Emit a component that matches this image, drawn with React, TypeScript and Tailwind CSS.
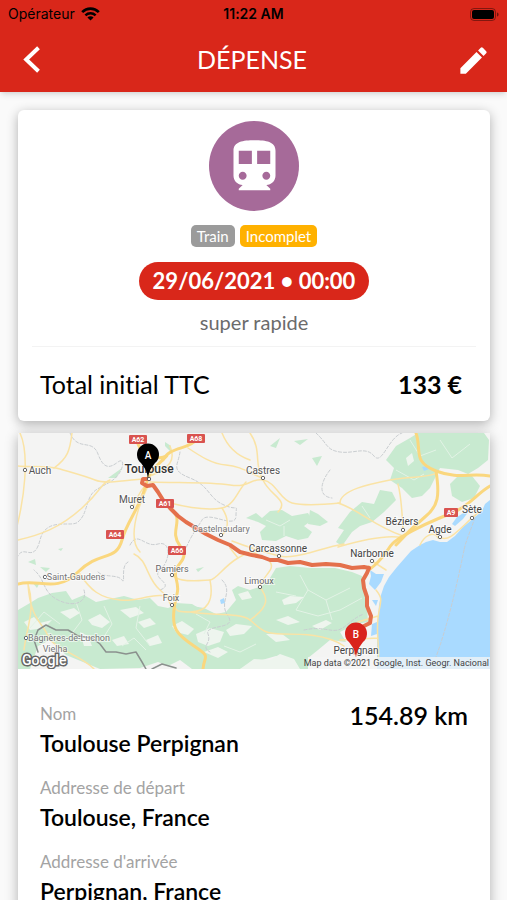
import { MdDirectionsSubway, MdEdit } from 'react-icons/md';

interface Expense {
  type: string;
  status: string;
  date: string;
  time: string;
  comment: string;
  total: string;
  distance: string;
}

interface Detail {
  label: string;
  value: string;
}

interface Place {
  name: string;
  x: number;
  y: number;
  dotX: number;
  dotY: number;
  size: number;
  color: string;
}

const expense: Expense = {
  type: 'Train',
  status: 'Incomplet',
  date: '29/06/2021',
  time: '00:00',
  comment: 'super rapide',
  total: '133 €',
  distance: '154.89 km',
};

const details: Detail[] = [
  { label: 'Nom', value: 'Toulouse Perpignan' },
  { label: 'Addresse de départ', value: 'Toulouse, France' },
  { label: "Addresse d'arrivée", value: 'Perpignan, France' },
];

const places: Place[] = [
  { name: 'Toulouse', x: 149, y: 473, dotX: 149, dotY: 479, size: 12, color: '#333' },
  { name: 'Auch', x: 40, y: 474, dotX: 25, dotY: 470, size: 10, color: '#555' },
  { name: 'Muret', x: 132, y: 503, dotX: 132, dotY: 507, size: 10, color: '#555' },
  { name: 'Castres', x: 263, y: 474, dotX: 263, dotY: 478, size: 10, color: '#555' },
  { name: 'Castelnaudary', x: 221, y: 532, dotX: 221, dotY: 535, size: 9, color: '#777' },
  { name: 'Carcassonne', x: 278, y: 552, dotX: 279, dotY: 556, size: 10, color: '#444' },
  { name: 'Béziers', x: 402, y: 525, dotX: 403, dotY: 530, size: 10, color: '#444' },
  { name: 'Agde', x: 440, y: 533, dotX: 440, dotY: 537, size: 10, color: '#444' },
  { name: 'Sète', x: 472, y: 513, dotX: 472, dotY: 518, size: 10, color: '#444' },
  { name: 'Narbonne', x: 372, y: 557, dotX: 372, dotY: 561, size: 10, color: '#444' },
  { name: 'Saint-Gaudens', x: 76, y: 580, dotX: 45, dotY: 577, size: 9, color: '#777' },
  { name: 'Pamiers', x: 172, y: 572, dotX: 172, dotY: 575, size: 9, color: '#666' },
  { name: 'Foix', x: 171, y: 601, dotX: 172, dotY: 605, size: 9, color: '#666' },
  { name: 'Limoux', x: 259, y: 584, dotX: 260, dotY: 587, size: 9, color: '#666' },
  { name: 'Bagnères-de-Luchon', x: 69, y: 641, dotX: 26, dotY: 638, size: 9, color: '#777' },
  { name: 'Vielha', x: 55, y: 652, dotX: 0, dotY: 0, size: 9, color: '#777' },
  { name: 'Perpignan', x: 356, y: 654, dotX: 0, dotY: 0, size: 10, color: '#444' },
];

const shields = [
  { name: 'A62', x: 138, y: 440 },
  { name: 'A68', x: 196, y: 439 },
  { name: 'A61', x: 165, y: 504 },
  { name: 'A64', x: 115, y: 535 },
  { name: 'A66', x: 177, y: 551 },
  { name: 'A9', x: 451, y: 513 },
];

const forests = [
  'M18 610L30 603 38 598 52 593 66 591 72 600 84 595 96 602 110 599 124 596 138 600 150 598 158 606 168 608 178 604 192 606 204 608 216 614 226 612 236 600 232 590 238 586 250 590 262 586 270 578 276 568 290 566 310 568 335 568 352 572 362 576 364 590 367 606 368 622 356 624 340 632 346 642 330 640 318 650 308 658 308 669 280 669 290 660 276 656 262 660 248 666 240 669 192 669 180 660 168 666 158 662 140 668 100 669 66 655 50 640 38 646 30 669 18 669z',
  'M246 518L256 513 262 518 270 511 282 510 292 516 308 513 312 520 304 526 312 532 308 538 298 540 286 536 276 541 262 540 260 532 266 526 258 522z',
  'M396 446L410 438 418 433 484 433 489 440 488 460 478 468 468 474 458 470 440 468 430 488 422 496 412 498 402 488 390 480 394 468 386 460z',
  'M450 484L460 474 472 476 480 486 474 498 462 502 452 496z',
  'M350 512L362 502 374 504 380 490 392 492 396 500 384 512 372 522 360 526 352 532 342 546 336 542 344 530 338 528z',
  'M270 446L280 438 276 448zM294 441L308 439 300 445zM312 458L322 456 317 466zM310 510l8 4 10 8-8 4-12-2z',
  'M108 478L122 468 116 478zM165 442l6 4 0 6-6-6zM28 562l7-3 1 6zM40 567l10 1-4 4zM32 582l8 0-3 6zM58 549l5-1-2 3z',
  'M176 603l16 1 10 6-24-2zM196 569l8-2-6 5z',
];

const clearings = [
  'M24 622l10-5 6 6 12-3-8 8-14 2zM60 612l14-4 6 5-10 6zM88 620l12-6 10 8-8 6-10-3zM120 610l16-3 8 6-14 5zM138 622l12-4 6 6-12 4zM112 640l12-4 5 8-12 2zM146 640l12-5 4 8-12 3z',
  'M172 626l10-5 12 8-6 6-12-3zM196 634l14-6 14 4-4 10-12 4-10-4zM226 630l10-6 16 2-8 8-14 2zM204 652l14-5 10 5-10 6zM238 594l10-3 4 7-10 2zM282 600l8-4 14 1-8 6-12 2zM276 620l12-4 12 6-12 3zM312 626l14-6 6 3-12 7zM406 458l6-5 2 8-6 5z',
  'M240 669l14-10 16 1 10-6 14 5 6 10zM80 632l8 4 4 10-8 0zM266 634l16 0 8 6-14 2z',
];

const valleys = [
  'M300 575L308 590 326 600 350 588M308 590L296 610 318 616 340 610 362 598M326 600L332 620M276 592L296 596',
  'M30 628L44 612 60 624M76 602L82 620 70 636M104 606L112 624 102 640M140 606L136 628 150 646M196 614L210 622 204 634',
  'M410 440L420 456 436 450M440 440L452 458 470 444M396 470L414 480 424 474M362 506L370 518',
  'M266 520L280 526 290 520M284 526L284 536M122 646L134 638 146 650M224 646L240 652 256 644',
];

const minorRoads = [
  'M18 466C30 467 50 466 60 469S85 476 95 480 122 481 142 479',
  'M72 433C70 450 68 458 54 468',
  'M20 433C30 455 24 500 16 530',
  'M18 540C40 535 60 528 82 508S100 484 110 480',
  'M133 507C138 495 142 488 147 484M148 486C136 510 128 540 140 552',
  'M150 482C180 483 210 482 230 485S250 478 263 480 280 500 292 503 320 505 340 503',
  'M150 476C170 468 176 460 170 446M188 448C200 456 212 464 226 465S248 472 262 478',
  'M222 433C228 448 238 456 250 460M250 433C262 450 254 464 262 478',
  'M170 503C190 508 210 510 222 508S238 490 246 482',
  'M222 508C230 520 228 530 222 535M232 541C250 548 264 552 279 556S320 548 344 544',
  'M263 480C270 496 290 500 278 512M340 503C340 490 370 484 390 480S430 478 436 473',
  'M338 503C360 510 372 525 403 536M398 484C402 500 402 515 403 530',
  'M338 547C362 540 388 534 403 538',
  'M172 575C180 584 204 580 210 580S224 566 238 558 250 550 260 556M238 558L230 548',
  'M134 554C148 560 146 578 160 590S166 602 172 605M80 574C90 590 100 598 120 600S150 592 172 597',
  'M210 580C214 600 208 612 190 612S180 610 172 605M190 612C210 616 240 612 250 620S262 634 282 634 326 634 344 646',
  'M250 620C270 606 268 598 260 587M260 587C262 576 276 570 270 562',
  'M28 584C36 610 26 630 24 650M28 584C30 620 44 624 48 636S82 656 94 669',
  'M378 662C380 648 376 636 378 618S384 600 376 590M340 640L378 638M358 622L378 616',
  'M440 537C450 545 466 520 482 510M420 545C424 536 434 530 438 538M372 561L386 570',
];

const mainRoads = [
  'M148 478C140 510 128 518 122 540S100 550 78 572 38 578 18 584',
  'M163 460C170 446 188 450 196 440M138 444C142 456 160 460 166 456S150 470 148 478',
  'M170 508C186 520 168 530 180 546S172 562 176 578 176 592 174 610 176 634 194 646 204 655 203 669',
  'M416 433C422 450 412 462 436 471S470 472 490 476M436 471C440 496 438 506 426 516S404 536 396 545',
  'M490 486C476 494 470 506 452 513S420 526 403 536 392 548 378 562 369 566 369 567',
];

const borders = [
  'M70 433C78 452 92 438 98 454S110 468 118 462 124 474 110 482 92 490 88 502 84 516 78 522 46 516 40 540 24 544 18 556',
  'M180 452C178 466 170 470 190 478S208 498 224 505 236 502 236 516 208 510 202 520 192 534 186 548',
  'M316 433C328 444 326 450 340 452S366 446 374 456 388 438 402 433M330 470C322 480 316 496 332 498',
  'M130 545C138 530 144 548 158 544S170 562 160 570 176 584 160 590',
  'M84 590C88 602 74 608 58 600S46 580 34 570M98 572C104 578 118 574 122 580S120 566 128 562',
  'M222 580C234 592 218 602 228 616S204 624 208 634 200 646 210 652',
  'M304 630C322 626 330 632 338 630S352 618 364 614M464 550C456 590 446 630 436 657M478 508C472 528 466 540 464 550',
];

const ROUTE =
  'M149 479L143 479 142 483 147 486 153 485 158 492 163 500 170 508 178 516 186 522 196 528 206 534 218 540 230 545 240 552 252 555 262 557 270 560 278 560 288 563 300 562 312 565 326 564 340 565 352 568 364 567 369 568 367 573 363 580 364 588 367 597 367 606 371 616 370 623 362 627 357 633 355 653';

const StatusBar = () => (
  <div className="grid h-7 grid-cols-3 items-center px-2 font-[Inter,sans-serif] text-sm text-black">
    <div className="flex items-center gap-1.5">
      <span>Opérateur</span>
      <svg width="19" height="14" viewBox="0 0 19 14" aria-hidden="true">
        <g fill="none" stroke="black">
          <path d="M1.2 5.1a11.8 11.8 0 0 1 16.6 0" strokeWidth="2.7" />
          <path d="M4.4 8.4a7.3 7.3 0 0 1 10.2 0" strokeWidth="2.5" />
        </g>
        <path d="M9.5 13.6L6.4 10.5a4.4 4.4 0 0 1 6.2 0z" />
      </svg>
    </div>
    <span className="text-center font-semibold">11:22 AM</span>
    <svg className="justify-self-end" width="29" height="13" viewBox="0 0 29 13" aria-hidden="true">
      <rect x="0.5" y="0.5" width="25" height="12" rx="3.5" fill="none" stroke="black" strokeOpacity="0.4" />
      <rect x="2" y="2" width="22" height="9" rx="2" />
      <path d="M27 4.5v4c1-.3 1.6-1 1.6-2s-.6-1.7-1.6-2z" fillOpacity="0.5" />
    </svg>
  </div>
);

const Pin = ({ x, y, letter, color }: { x: number; y: number; letter: string; color: string }) => (
  <g>
    <path
      d={`M${x} ${y}c-1-9-3-10-7-16a11 11 0 1 1 14 0c-4 6-6 7-7 16z`}
      fill={color}
    />
    <text x={x} y={y - 20} fill="white" fontSize="10" fontWeight="500" textAnchor="middle">
      {letter}
    </text>
  </g>
);

const RouteMap = () => (
  <svg
    className="block w-full font-[Roboto,sans-serif]"
    viewBox="18 433 472 236"
    role="img"
    aria-label="Toulouse Perpignan"
  >
    <rect x="18" y="433" width="472" height="236" fill="#f4f4f3" />
    {forests.map((d) => <path key={d} d={d} fill="#c8ead0" />)}
    {clearings.map((d) => <path key={d} d={d} fill="#eef5ee" />)}
    {valleys.map((d) => <path key={d} d={d} fill="none" stroke="#e3f3e6" />)}

    <path
      d="M490 500L485 504 482 511 474 518 463 527 455 536 447 542 440 542 433 540 426 542 420 545 411 551 404 559 397 567 389 577 384 586 381 595 379 605 378 618 377 630 377 669 490 669z"
      fill="#a9daff"
    />
    <path d="M452 524l5-7 8-5 4-1-6 8-8 7zM370 570l6 4 8 0-3 8-6 8-6-6 2-8zM372 600l6 0-2 6zM372 624l5-2 0 12-6 2zM422 467l5-1 2 3-5 2zM220 600l4-2 1 5-4 1z" fill="#a9daff" />

    <g fill="none" strokeLinecap="round" strokeLinejoin="round">
      {borders.map((d) => <path key={d} d={d} stroke="#c9cdd0" strokeWidth="1" strokeDasharray="3 2" />)}
      {minorRoads.map((d) => <path key={d} d={d} stroke="#fae3a5" strokeWidth="1.5" />)}
      {mainRoads.map((d) => <path key={d} d={d} stroke="#fad77e" strokeWidth="3" />)}
      <path
        d="M38 652L34 640 38 630 46 625 56 630 68 630 78 636 92 638 100 644 106 652 116 652 126 654 136 652 142 662 146 669M152 669l10-5 14 4"
        stroke="#8b918e"
        strokeWidth="1.5"
      />
      <path d={ROUTE} stroke="#e4704c" strokeWidth="4" />
    </g>

    {shields.map((s) => (
      <g key={s.name}>
        <rect x={s.x - (s.name.length > 2 ? 9 : 7)} y={s.y - 5} width={s.name.length > 2 ? 18 : 14} height="9" rx="1" fill="#d9534f" />
        <text x={s.x} y={s.y + 2} fill="white" fontSize="7" fontWeight="700" textAnchor="middle">
          {s.name}
        </text>
      </g>
    ))}

    {places.map((p) => (
      <g key={p.name}>
        {p.dotX > 0 && <circle cx={p.dotX} cy={p.dotY} r="1.7" fill="white" stroke="#666" />}
        <text
          x={p.x}
          y={p.y}
          fill={p.color}
          fontSize={p.size}
          fontWeight={p.size > 10 ? 500 : 400}
          textAnchor="middle"
          stroke="white"
          strokeWidth="2"
          strokeOpacity="0.6"
          paintOrder="stroke"
        >
          {p.name}
        </text>
      </g>
    ))}

    <Pin x={148} y={479} letter="A" color="#000" />
    <Pin x={356} y={658} letter="B" color="#d9231c" />

    <text x="22" y="665" fill="white" stroke="#666" strokeWidth="3" paintOrder="stroke" fontSize="14" fontWeight="500">
      Google
    </text>
    <rect x="308" y="657" width="182" height="12" fill="#f5f5f5" fillOpacity="0.75" />
    <text x="489" y="666" fill="#444" fontSize="9" textAnchor="end">
      Map data ©2021 Google, Inst. Geogr. Nacional
    </text>
  </svg>
);

const App = () => {
  return (
    <div className="flex h-screen flex-col overflow-hidden bg-[#fafafa] font-[Lato,sans-serif] text-black [font-variant-ligatures:none]">
      <header className="relative z-10 shrink-0 bg-[#d9271a] shadow-md">
        <StatusBar />
        <div className="flex h-16 items-center justify-between px-4 text-white">
          <button type="button" aria-label="Retour">
            <svg width="32" height="32" viewBox="0 0 32 32" fill="none" stroke="currentColor" strokeWidth="4" aria-hidden="true">
              <path d="M22.500 3.800L10.200 15.500l12.300 11.700" />
            </svg>
          </button>
          <h1 className="text-[25px]">DÉPENSE</h1>
          <button type="button" aria-label="Modifier">
            <MdEdit size={35} />
          </button>
        </div>
      </header>

      <main className="flex-1 space-y-3 overflow-y-auto pt-[18px] pr-[17px] pl-[18px] [scrollbar-width:none]">
        <section className="rounded-md bg-white px-3.5 pt-[11px] shadow-[0_3px_12px_rgba(0,0,0,0.3)]">
          <div className="flex flex-col items-center">
            <div className="flex size-[90px] items-center justify-center rounded-full bg-[#a66a99] text-white">
              <MdDirectionsSubway size={63} />
            </div>
            <div className="mt-3.5 flex gap-[5px] text-[15px] leading-[22px] text-white">
              <span className="rounded-[5px] bg-[#9b9b9b] px-1.5">{expense.type}</span>
              <span className="rounded-[5px] bg-[#ffb100] px-1.5">{expense.status}</span>
            </div>
            <p className="mt-[15px] rounded-full bg-[#d9271a] px-3.5 text-[22px] leading-[38px] font-bold text-white">
              {expense.date} • {expense.time}
            </p>
            <p className="mt-2.5 text-[20px] leading-6 text-[#6b6b6b]">{expense.comment}</p>
          </div>
          <div className="mt-3 flex items-center justify-between border-t border-[#f3f3f3] px-2 pr-3.5 text-[25px] leading-[74px]">
            <span>Total initial TTC</span>
            <span className="font-bold">{expense.total}</span>
          </div>
        </section>

        <section className="bg-white shadow-[0_3px_12px_rgba(0,0,0,0.3)]">
          <RouteMap />
          <div className="flex items-start justify-between px-[22px] pt-8 pb-6">
            <dl className="space-y-4">
              {details.map((detail) => (
                <div key={detail.label}>
                  <dt className="text-[17px] leading-[26px] text-[#a3a3a3]">{detail.label}</dt>
                  <dd className="text-[23px] leading-8 font-semibold">{detail.value}</dd>
                </div>
              ))}
            </dl>
            <p className="text-[25px] leading-7 font-semibold">{expense.distance}</p>
          </div>
        </section>
      </main>
    </div>
  );
};

export default App;
